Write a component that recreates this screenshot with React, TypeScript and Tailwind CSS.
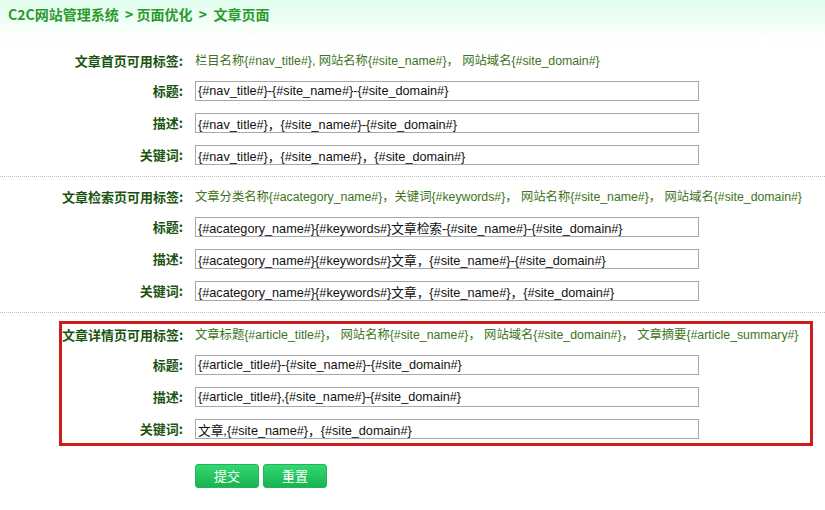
// 文章页面 SEO settings — breadcrumb header, three tag sections, submit/reset.
const cn = '"Noto Sans CJK SC", "Liberation Sans", sans-serif';
const latin = '"Liberation Sans", "Noto Sans CJK SC", sans-serif';

interface Section {
  label: string;
  tags: string;
  rows: { label: string; value: string }[];
}

const sections: Section[] = [
  {
    label: "文章首页可用标签:",
    tags: "栏目名称{#nav_title#}, 网站名称{#site_name#}， 网站域名{#site_domain#}",
    rows: [
      { label: "标题:", value: "{#nav_title#}-{#site_name#}-{#site_domain#}" },
      { label: "描述:", value: "{#nav_title#}，{#site_name#}-{#site_domain#}" },
      { label: "关键词:", value: "{#nav_title#}，{#site_name#}，{#site_domain#}" },
    ],
  },
  {
    label: "文章检索页可用标签:",
    tags: "文章分类名称{#acategory_name#}，关键词{#keywords#}， 网站名称{#site_name#}， 网站域名{#site_domain#}",
    rows: [
      { label: "标题:", value: "{#acategory_name#}{#keywords#}文章检索-{#site_name#}-{#site_domain#}" },
      { label: "描述:", value: "{#acategory_name#}{#keywords#}文章，{#site_name#}-{#site_domain#}" },
      { label: "关键词:", value: "{#acategory_name#}{#keywords#}文章，{#site_name#}，{#site_domain#}" },
    ],
  },
  {
    label: "文章详情页可用标签:",
    tags: "文章标题{#article_title#}， 网站名称{#site_name#}， 网站域名{#site_domain#}， 文章摘要{#article_summary#}",
    rows: [
      { label: "标题:", value: "{#article_title#}-{#site_name#}-{#site_domain#}" },
      { label: "描述:", value: "{#article_title#},{#site_name#}-{#site_domain#}" },
      { label: "关键词:", value: "文章,{#site_name#}，{#site_domain#}" },
    ],
  },
];

function Label({ children }: { children: string }) {
  return (
    <div
      className="w-[121px] shrink-0 whitespace-nowrap text-right text-[13px] font-bold text-[#1a5410]"
      style={{ fontFamily: cn }}
    >
      {children}
    </div>
  );
}

function SectionBody({ s }: { s: Section }) {
  return (
    <>
      <div className="flex h-[20px] items-center">
        <Label>{s.label}</Label>
        <div
          className="ml-[12px] min-w-0 flex-1 overflow-hidden whitespace-nowrap text-[12.3px] text-[#3d7420]"
          style={{ fontFamily: latin }}
        >
          {s.tags}
        </div>
      </div>
      {s.rows.map((r, i) => (
        <div key={r.label} className={`flex h-[20px] items-center ${i === 0 ? "mt-[10px]" : "mt-[12px]"}`}>
          <Label>{r.label}</Label>
          <input
            readOnly
            value={r.value}
            className="ml-[12px] h-[20px] w-[504px] border border-[#a8a8a8] bg-white px-[2px] text-[12.7px] text-[#111] outline-none"
            style={{ fontFamily: latin }}
          />
        </div>
      ))}
    </>
  );
}

export default function App() {
  return (
    <div className="min-h-[510px] w-[825px] bg-white" style={{ fontFamily: cn }}>
      <div className="flex h-[41px] items-start bg-gradient-to-b from-[#e0fdee] to-white pl-[8px] pt-[4px]">
        <span className="whitespace-pre text-[14px] font-bold text-[#2a9a2a]">
          {"C2C网站管理系统  > 页面优化  >  文章页面"}
        </span>
      </div>

      <div className="border-b border-dotted border-[#b7c6b7] pb-[11px] pt-[10px]">
        <div className="ml-[59px] w-[754px] border-x-[3px] border-transparent">
          <SectionBody s={sections[0]} />
        </div>
      </div>

      <div className="border-b border-dotted border-[#b7c6b7] pb-[11px] pt-[10px]">
        <div className="ml-[59px] w-[754px] border-x-[3px] border-transparent">
          <SectionBody s={sections[1]} />
        </div>
      </div>

      <div className="ml-[59px] mt-[8px] w-[754px] border-[3px] border-[#cc1b1b] pb-[4px] pt-[1px]">
        <SectionBody s={sections[2]} />
      </div>

      <div className="ml-[195px] mt-[18px] flex gap-[4px]">
        {["提交", "重置"].map((t) => (
          <button
            key={t}
            type="button"
            className="h-[24px] w-[64px] rounded-[3px] border border-[#22b558] bg-gradient-to-b from-[#34d872] to-[#16b350] text-[13px] text-white"
            style={{ fontFamily: cn }}
          >
            {t}
          </button>
        ))}
      </div>
    </div>
  );
}
